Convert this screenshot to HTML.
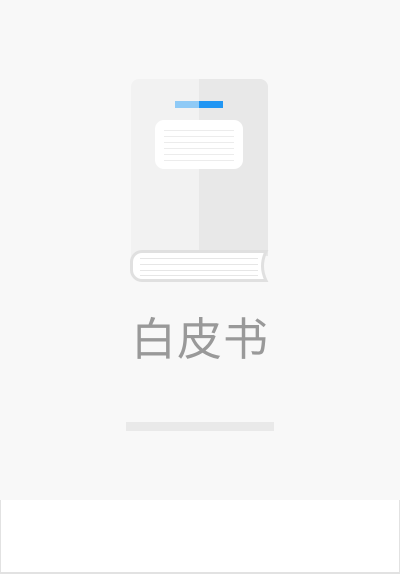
<!DOCTYPE html>
<html><head><meta charset="utf-8"><style>
html,body{margin:0;padding:0;width:400px;height:574px;overflow:hidden;background:#fff}
.top{position:absolute;left:0;top:0;width:400px;height:500px;background:#f8f8f8}
.bot{position:absolute;left:0;top:500px;width:398px;height:72px;background:#fff;border:1px solid #e2e2e2;border-top:none;border-width:0 1px 2px 1px}
.t{position:absolute;left:120px;width:160px;top:310px;text-align:center;font-family:"Liberation Sans","Noto Sans CJK SC",sans-serif;font-size:45px;color:#999;letter-spacing:1px;line-height:60px}
.bar{position:absolute;left:126px;top:422px;width:148px;height:9px;background:#e9e9e9}
</style></head><body>
<div class="top"></div>
<svg style="position:absolute;left:0;top:0" width="400" height="300">
<path d="M131 87 a8 8 0 0 1 8 -8 H199 V256 H131 Z" fill="#f2f2f2"/>
<path d="M199 79 H260 a8 8 0 0 1 8 8 V256 H199 Z" fill="#e8e8e8"/>
<rect x="175" y="101" width="24" height="7" fill="#8fcaf6"/>
<rect x="199" y="101" width="24" height="7" fill="#2196f3"/>
<rect x="155" y="120" width="88" height="49" rx="9" fill="#fff"/>
<g stroke="#ececec" stroke-width="1">
<line x1="164" y1="130.5" x2="234" y2="130.5"/><line x1="164" y1="136.5" x2="234" y2="136.5"/>
<line x1="164" y1="142.5" x2="234" y2="142.5"/><line x1="164" y1="148.5" x2="234" y2="148.5"/>
<line x1="164" y1="154.5" x2="234" y2="154.5"/><line x1="164" y1="160.5" x2="234" y2="160.5"/></g>
<path d="M142 251.5 H266 Q259 266 266 280.5 H142 a10.5 10.5 0 0 1 -10.5 -10.5 V262 a10.5 10.5 0 0 1 10.5 -10.5 Z" fill="#fff" stroke="#e0e0e0" stroke-width="3"/>
<g stroke="#e6e6e6" stroke-width="1">
<line x1="140" y1="258.5" x2="258" y2="258.5"/><line x1="140" y1="264.5" x2="258" y2="264.5"/>
<line x1="140" y1="270.5" x2="258" y2="270.5"/><line x1="140" y1="275.5" x2="258" y2="275.5"/></g>
</svg>
<div class="t">白皮书</div>
<div class="bar"></div>
<div class="bot"></div>
</body></html>
